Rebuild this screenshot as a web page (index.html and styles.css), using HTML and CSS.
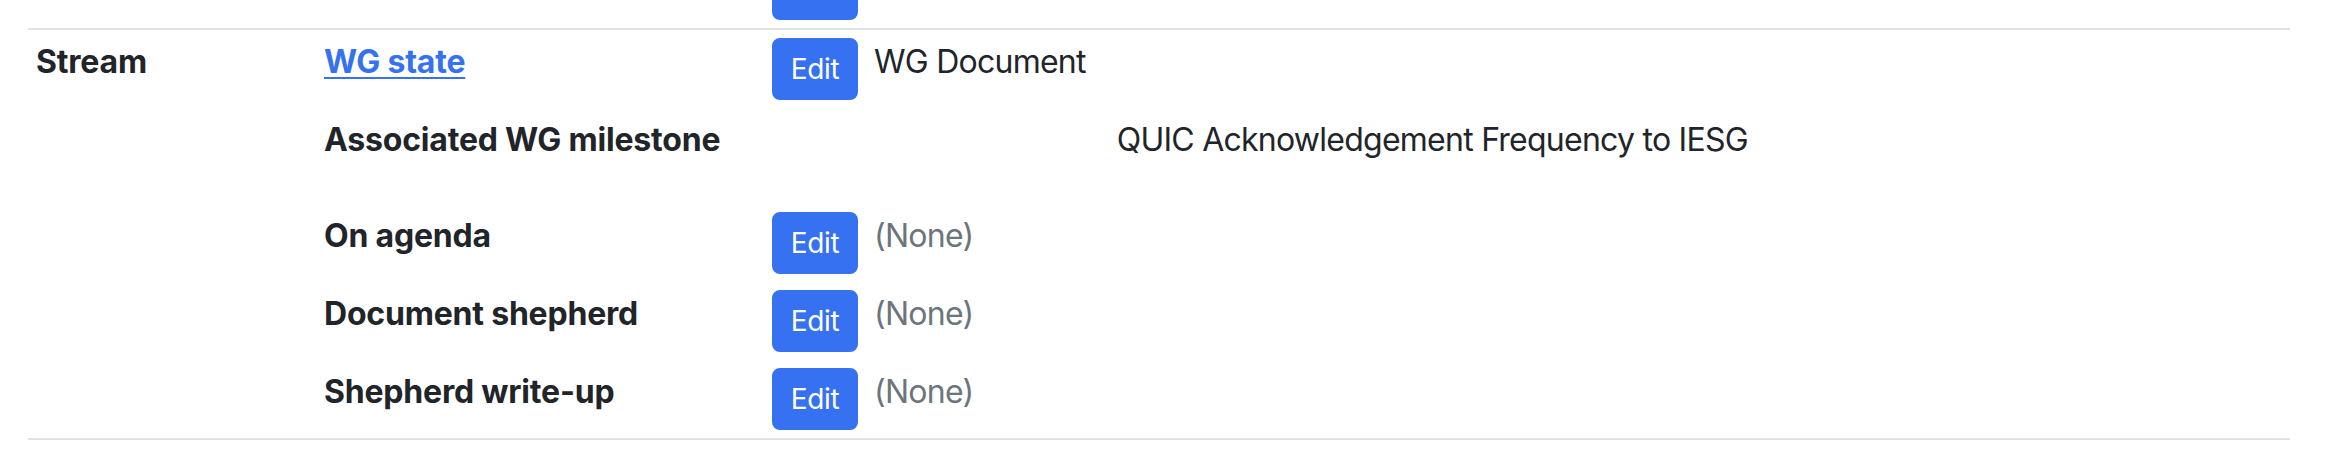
FILE: index.html
```html
<!DOCTYPE html>
<html lang="en">
<head>
<meta charset="utf-8">
<title>Stream</title>
<link rel="stylesheet" href="styles.css">
</head>
<body>
<div class="wrap">
  <table class="info">
    <colgroup>
      <col class="c1"><col class="c2"><col class="c3"><col class="c4">
    </colgroup>
    <tbody class="prev">
      <tr>
        <th></th>
        <th></th>
        <td class="edit"><a class="btn" href="#">Edit</a></td>
        <td></td>
      </tr>
    </tbody>
    <tbody class="group">
      <tr class="first">
        <th>Stream</th>
        <th><a class="lnk" href="#">WG state</a></th>
        <td class="edit"><a class="btn" href="#">Edit</a></td>
        <td>WG Document</td>
      </tr>
      <tr>
        <th></th>
        <th>Associated WG milestone</th>
        <td class="edit"></td>
        <td>
          <dl class="ms">
            <dt></dt>
            <dd>QUIC Acknowledgement Frequency to IESG</dd>
          </dl>
        </td>
      </tr>
      <tr>
        <th></th>
        <th>On agenda</th>
        <td class="edit"><a class="btn" href="#">Edit</a></td>
        <td class="muted">(None)</td>
      </tr>
      <tr>
        <th></th>
        <th>Document shepherd</th>
        <td class="edit"><a class="btn" href="#">Edit</a></td>
        <td class="muted">(None)</td>
      </tr>
      <tr class="last">
        <th></th>
        <th>Shepherd write-up</th>
        <td class="edit"><a class="btn" href="#">Edit</a></td>
        <td class="muted">(None)</td>
      </tr>
    </tbody>
  </table>
</div>
</body>
</html>
```

FILE: styles.css
```css
html, body {
  margin: 0;
  padding: 0;
  background: #fff;
}

body {
  font-family: Inter, "Noto Sans", "Liberation Sans", sans-serif;
  font-size: 32px;
  line-height: 1.5;
  color: #212529;
}

.wrap {
  margin-top: -50px;
  padding-left: 28px;
}

.info {
  width: 2262px;
  table-layout: fixed;
  border-collapse: separate;
  border-spacing: 0;
}

.c1 { width: 288px; }
.c2 { width: 448px; }
.c3 { width: 102px; }
.c4 { width: auto; }

.info th,
.info td {
  padding: 8px;
  vertical-align: top;
  text-align: left;
}

.info th {
  font-weight: 700;
  letter-spacing: -0.2px;
}

.info td {
  font-weight: 400;
  letter-spacing: -0.75px;
}

.group .first > th,
.group .first > td {
  border-top: 2px solid #dee2e6;
}

.group .last > th,
.group .last > td {
  border-bottom: 2px solid #dee2e6;
}

.lnk {
  color: #3571f0;
  text-decoration: underline;
  text-decoration-thickness: 2px;
  text-underline-offset: 4px;
}

.btn {
  display: inline-block;
  box-sizing: border-box;
  width: 86px;
  height: 62px;
  padding: 8px 0;
  border: 2px solid #3571f0;
  border-radius: 8px;
  background: #3571f0;
  color: #fff;
  font-size: 28px;
  line-height: 42px;
  font-weight: 400;
  letter-spacing: -0.3px;
  text-align: center;
  text-decoration: none;
  vertical-align: top;
}

.muted {
  color: #6c757d;
}

.ms {
  display: grid;
  grid-template-columns: 1fr 5fr;
  margin: 0 -24px 32px;
}

.ms dt,
.ms dd {
  margin: 0;
  padding: 0 24px;
}
```
